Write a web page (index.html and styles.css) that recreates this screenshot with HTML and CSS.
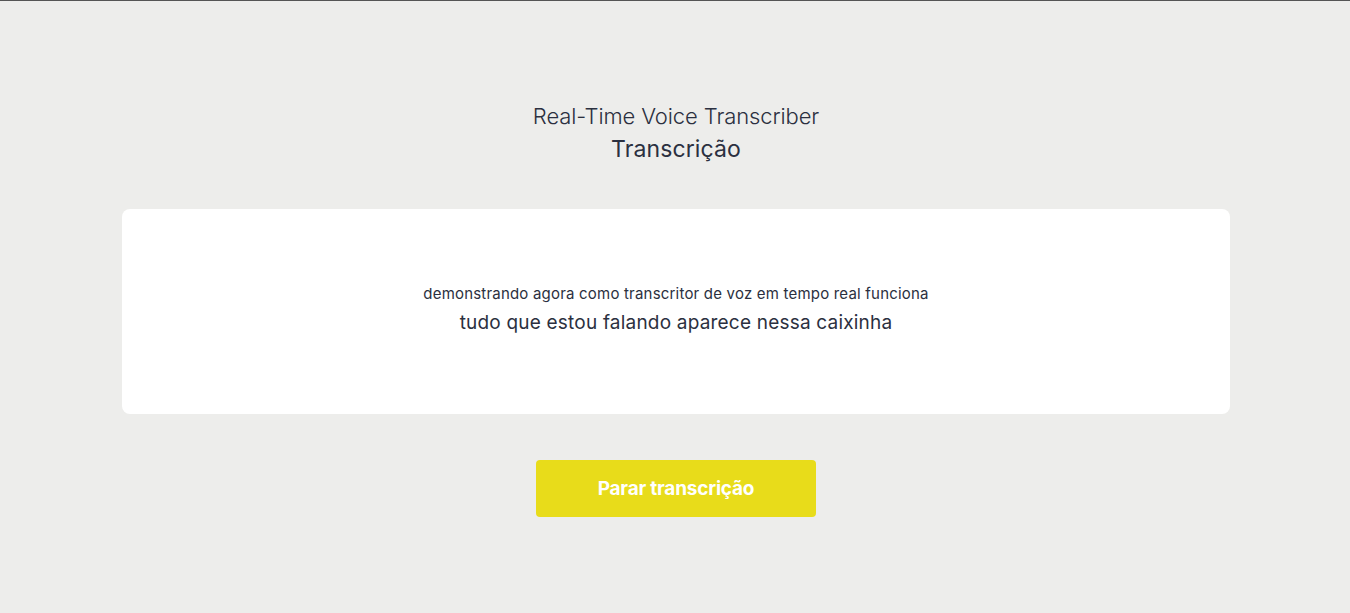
FILE: index.html
```html
<!DOCTYPE html>
<html lang="pt">
<head>
<meta charset="utf-8">
<title>Real-Time Voice Transcriber</title>
<link rel="stylesheet" href="styles.css">
</head>
<body>
<div class="topline"></div>
<main class="page">
  <header class="heading">
    <h1 class="title">Real-Time Voice Transcriber</h1>
    <h2 class="subtitle">Transcrição</h2>
  </header>
  <section class="card">
    <p class="line-small">demonstrando agora como transcritor de voz em tempo real funciona</p>
    <p class="line-large">tudo que estou falando aparece nessa caixinha</p>
  </section>
  <button class="stop-btn" type="button">Parar transcrição</button>
</main>
</body>
</html>
```
FILE: styles.css
```css
* { box-sizing: border-box; }
html, body { margin: 0; padding: 0; }
body {
  background: #ededeb;
  font-family: Inter, "Noto Sans", sans-serif;
  color: #2b3040;
  height: 613px;
  overflow: hidden;
}
.topline { height: 1px; background: #555; }
.page {
  display: flex;
  flex-direction: column;
  align-items: center;
  padding-left: 2px;
}
.heading {
  margin-top: 100px;
  display: flex;
  flex-direction: column;
  align-items: center;
}
.title {
  margin: 0;
  font-size: 22px;
  font-weight: 300;
  line-height: 30px;
  letter-spacing: -0.1px;
}
.subtitle {
  margin: 3px 0 0;
  font-size: 23px;
  font-weight: 400;
  line-height: 30px;
  letter-spacing: 0.1px;
}
.card {
  margin-top: 45px;
  width: 1108px;
  height: 205px;
  background: #fff;
  border-radius: 8px;
  display: flex;
  flex-direction: column;
  align-items: center;
  justify-content: center;
  padding-bottom: 4px;
}
.line-small {
  margin: 0;
  font-size: 15px;
  line-height: 20px;
  letter-spacing: 0.2px;
}
.line-large {
  margin: 6px 0 0;
  font-size: 19px;
  line-height: 26px;
  letter-spacing: 0.2px;
}
.stop-btn {
  margin-top: 46px;
  width: 280px;
  height: 57px;
  background: #e8dc1a;
  border: none;
  border-radius: 4px;
  color: #fff;
  font-family: Inter, "Noto Sans", sans-serif;
  font-size: 19px;
  font-weight: 700;
  letter-spacing: -0.2px;
}
```
